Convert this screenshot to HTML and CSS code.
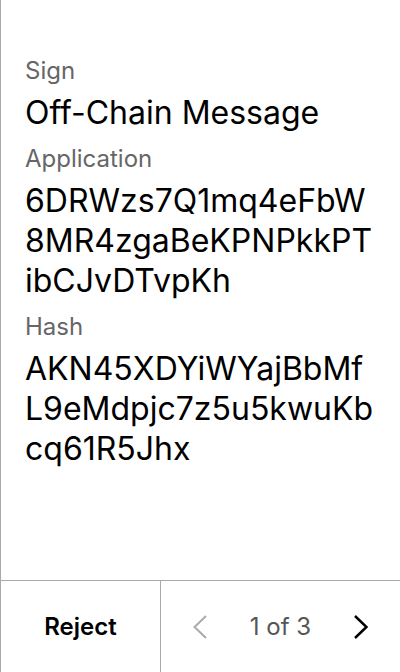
FILE: index.html
```html
<!DOCTYPE html>
<html>
<head>
<meta charset="utf-8">
<link rel="stylesheet" href="styles.css">
</head>
<body>
<div class="screen">
  <main class="content">
    <div class="field">
      <div class="label">Sign</div>
      <div class="value">Off-Chain Message</div>
    </div>
    <div class="field">
      <div class="label">Application</div>
      <div class="value">6DRWzs7Q1mq4eFbW<br>8MR4zgaBeKPNPkkPT<br>ibCJvDTvpKh</div>
    </div>
    <div class="field">
      <div class="label">Hash</div>
      <div class="value">AKN45XDYiWYajBbMf<br>L9eMdpjc7z5u5kwuKb<br>cq61R5Jhx</div>
    </div>
  </main>
  <footer class="bar">
    <div class="reject">Reject</div>
    <div class="pager">
      <svg class="chev chev-prev" width="14" height="24" viewBox="0 0 14 24"><path d="M13 1 L1.5 12 L13 23" fill="none" stroke="currentColor" stroke-width="2"/></svg>
      <span class="count">1 of 3</span>
      <svg class="chev chev-next" width="14" height="24" viewBox="0 0 14 24"><path d="M1 1 L12.5 12 L1 23" fill="none" stroke="currentColor" stroke-width="2.5"/></svg>
    </div>
  </footer>
</div>
</body>
</html>
```
FILE: styles.css
```css
html, body {
  margin: 0;
  padding: 0;
  background: #fff;
}
body {
  font-family: Inter, "Noto Sans", sans-serif;
  color: #000;
}
.screen {
  width: 400px;
  height: 672px;
  box-sizing: border-box;
  border-left: 1px solid #aaa;
  display: flex;
  flex-direction: column;
}
.content {
  flex: 1;
  padding: 55px 0 0 24px;
}
.field {
  margin-bottom: 10px;
}
.label {
  font-size: 24px;
  line-height: 32px;
  color: #666;
  margin-bottom: 6px;
}
.value {
  font-size: 32px;
  line-height: 40px;
  color: #000;
}
.bar {
  height: 92px;
  border-top: 1px solid #aaa;
  box-sizing: border-box;
  display: flex;
}
.reject {
  width: 159px;
  border-right: 1px solid #aaa;
  display: flex;
  align-items: center;
  justify-content: center;
  font-size: 24px;
  font-weight: 600;
  color: #000;
}
.pager {
  flex: 1;
  display: flex;
  align-items: center;
  justify-content: space-between;
  padding: 0 32px;
}
.count {
  font-size: 24px;
  color: #555;
}
.chev-prev {
  color: #aaa;
}
.chev-next {
  color: #000;
}
```
